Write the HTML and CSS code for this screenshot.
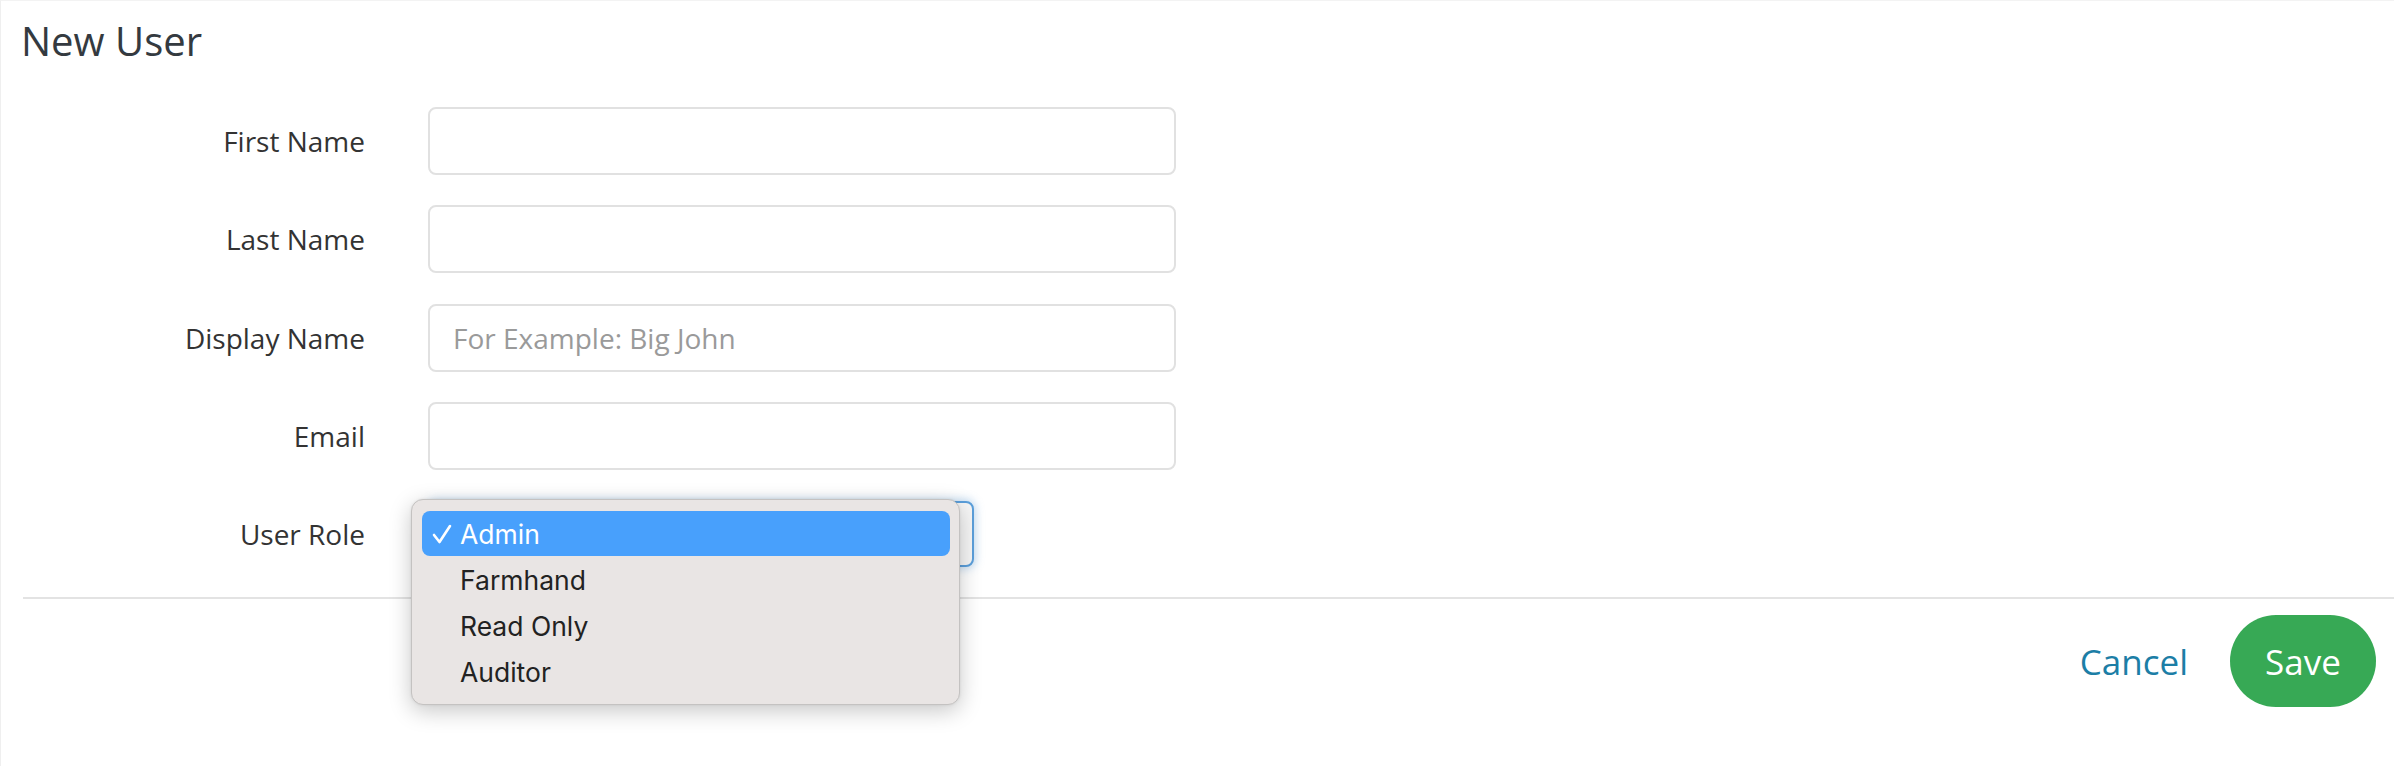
FILE: index.html
```html
<!DOCTYPE html>
<html lang="en">
<head>
<meta charset="utf-8">
<title>New User</title>
<link rel="stylesheet" href="styles.css">
</head>
<body>
<div class="page">
  <h1 class="title">New User</h1>
  <form class="form">
    <div class="row">
      <label class="label">First Name</label>
      <input class="input" type="text">
    </div>
    <div class="row">
      <label class="label">Last Name</label>
      <input class="input" type="text">
    </div>
    <div class="row">
      <label class="label">Display Name</label>
      <input class="input" type="text" placeholder="For Example: Big John">
    </div>
    <div class="row">
      <label class="label">Email</label>
      <input class="input" type="text">
    </div>
    <div class="row">
      <label class="label">User Role</label>
      <div class="select-wrap">
        <div class="select">
          <svg class="chevron" width="20" height="12" viewBox="0 0 20 12"><polyline points="2,2 10,9 18,2" fill="none" stroke="#444" stroke-width="2.4" stroke-linecap="round" stroke-linejoin="round"/></svg>
        </div>
        <div class="menu">
          <div class="item item-active">
            <svg class="check" width="20" height="20" viewBox="0 0 20 20"><polyline points="2,11 7.5,18 18,2" fill="none" stroke="#fff" stroke-width="2.6" stroke-linecap="round" stroke-linejoin="round"/></svg>
            <span>Admin</span>
          </div>
          <div class="item"><span>Farmhand</span></div>
          <div class="item"><span>Read Only</span></div>
          <div class="item"><span>Auditor</span></div>
        </div>
      </div>
    </div>
  </form>
  <div class="divider"></div>
  <div class="footer">
    <button class="cancel" type="button">Cancel</button>
    <button class="save" type="button">Save</button>
  </div>
</div>
</body>
</html>
```
FILE: styles.css
```css
html, body {
  margin: 0;
  padding: 0;
  background: #ffffff;
}

body {
  font-family: "Open Sans", "Noto Sans", sans-serif;
  color: #333333;
}

.page {
  height: 766px;
  box-sizing: border-box;
  border-left: 1px solid #efefef;
  border-top: 1px solid #f3f3f3;
  padding-top: 13px;
}

.title {
  margin: 0 0 0 20px;
  font-size: 40px;
  line-height: 54px;
  font-weight: 400;
  color: #343a40;
}

.form {
  margin: 39px 0 0 21px;
  display: flex;
  flex-direction: column;
  gap: 30.25px;
}

.row {
  display: flex;
  align-items: center;
  height: 68px;
}

.label {
  width: 343px;
  text-align: right;
  font-size: 28px;
  color: #333333;
  margin-right: 63px;
}

.input {
  width: 748px;
  height: 68px;
  box-sizing: border-box;
  border: 2px solid #e1e1e1;
  border-radius: 8px;
  padding: 0 23px;
  font-family: "Open Sans", sans-serif;
  font-size: 28px;
  color: #333;
  background: #fff;
  outline: none;
}

.input::placeholder {
  color: #9a9a9a;
}

.select-wrap {
  position: relative;
  width: 546px;
  height: 66px;
}

.select {
  height: 66px;
  box-sizing: border-box;
  border: 2px solid #5b9fdb;
  border-radius: 8px;
  background: #f6f6f6;
  box-shadow: 0 0 8px 2px rgba(91, 159, 219, 0.35);
  display: flex;
  align-items: center;
  justify-content: flex-end;
  padding: 0 12px 0 23px;
}

.chevron {
  display: block;
}

.menu {
  position: absolute;
  left: -17px;
  top: -2px;
  width: 549px;
  box-sizing: border-box;
  padding: 11px 9px 10px 10px;
  background: #e9e5e4;
  border: 1px solid #c4c2c1;
  border-radius: 12px;
  box-shadow: 0 6px 22px rgba(0, 0, 0, 0.22), 0 0 3px rgba(0, 0, 0, 0.08);
  display: flex;
  flex-direction: column;
  gap: 1px;
  font-family: "Inter", "Liberation Sans", sans-serif;
}

.item {
  position: relative;
  height: 45px;
  display: flex;
  align-items: center;
  padding-left: 38px;
  font-size: 26.5px;
  color: #222222;
  border-radius: 8px;
}

.item-active {
  background: #48a0fc;
  color: #ffffff;
}

.check {
  position: absolute;
  left: 10px;
  top: 13px;
}

.divider {
  margin: 29px 0 0 22px;
  height: 2px;
  background: #e3e3e3;
}

.footer {
  display: flex;
  justify-content: flex-end;
  align-items: center;
  margin-top: 16px;
  padding-right: 18px;
  gap: 42px;
}

.cancel {
  border: none;
  background: none;
  padding: 0;
  font-family: "Open Sans", sans-serif;
  font-size: 35px;
  color: #1c7ea6;
  cursor: pointer;
}

.save {
  width: 146px;
  height: 92px;
  border: none;
  border-radius: 46px;
  background: #37a955;
  color: #ffffff;
  font-family: "Open Sans", sans-serif;
  font-size: 35px;
  cursor: pointer;
}
```
